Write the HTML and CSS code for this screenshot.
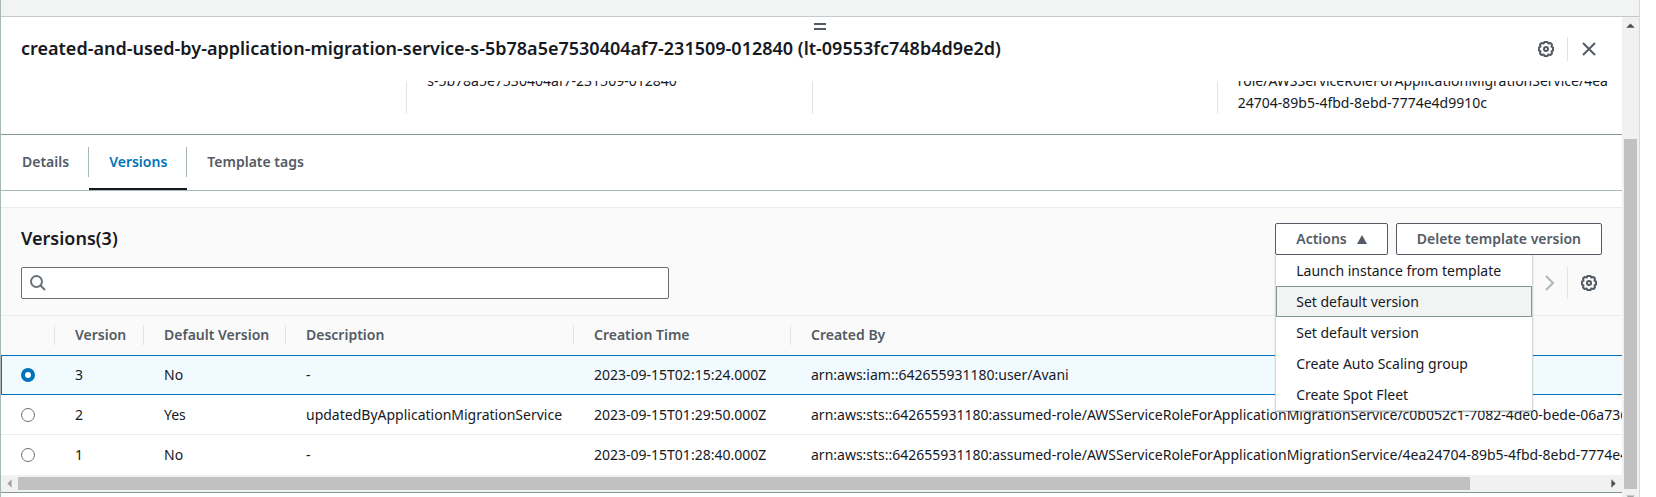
FILE: index.html
```html
<!DOCTYPE html>
<html lang="en">
<head>
<meta charset="utf-8">
<title>Launch template versions</title>
<link rel="stylesheet" href="styles.css">
</head>
<body>
<svg class="sprite" aria-hidden="true">
  <symbol id="gear" viewBox="0 0 16 16">
    <path d="M6.500 1H9.500L10.300 2.500 12.500 2 14 3.500 13.500 5.700 15 6.500V9.500L13.500 10.300 14 12.500 12.500 14 10.300 13.500 9.500 15H6.500L5.700 13.500 3.500 14 2 12.500 2.500 10.300 1 9.500V6.500L2.500 5.700 2 3.500 3.500 2 5.700 2.500Z" fill="none" stroke="currentColor" stroke-width="2" stroke-linejoin="round"/>
    <circle cx="8" cy="8" r="2" fill="none" stroke="currentColor" stroke-width="2"/>
  </symbol>
</svg>
<div class="frame">
  <div class="topbar"></div>
  <div class="panel">
    <main class="content">
      <header class="title-bar">
        <h1 class="title">created-and-used-by-application-migration-service-s-5b78a5e7530404af7-231509-012840 (lt-09553fc748b4d9e2d)</h1>
        <div class="tools">
          <button class="icon-button" aria-label="Preferences"><svg class="icon"><use href="#gear"/></svg></button>
          <span class="rule short"></span>
          <button class="icon-button" aria-label="Close"><svg class="icon" viewBox="0 0 16 16"><path d="M2 2 14 14M14 2 2 14" fill="none" stroke="currentColor" stroke-width="2"/></svg></button>
        </div>
      </header>
      <section class="summary">
        <div class="summary-cell"></div>
        <div class="summary-cell">s-5b78a5e7530404af7-231509-012840<br>&nbsp;</div>
        <div class="summary-cell"></div>
        <div class="summary-cell">role/AWSServiceRoleForApplicationMigrationService/4ea<br>24704-89b5-4fbd-8ebd-7774e4d9910c</div>
      </section>
      <nav class="tabs">
        <a class="tab" href="#details">Details</a>
        <a class="tab active" href="#versions">Versions</a>
        <a class="tab" href="#tags">Template tags</a>
      </nav>
      <section class="versions">
        <div class="versions-head">
          <div class="row">
            <h2 class="subtitle">Versions(3)</h2>
            <div class="actions">
              <div class="dropdown">
                <button class="button" aria-expanded="true">Actions <svg class="caret" viewBox="0 0 10 9"><path d="M5 0 10 9H0Z" fill="currentColor"/></svg></button>
                <div class="menu">
                  <button class="item">Launch instance from template</button>
                  <button class="item current">Set default version</button>
                  <button class="item">Set default version</button>
                  <button class="item">Create Auto Scaling group</button>
                  <button class="item">Create Spot Fleet</button>
                </div>
              </div>
              <button class="button">Delete template version</button>
            </div>
          </div>
          <div class="row">
            <label class="search">
              <svg class="icon" viewBox="0 0 16 16"><circle cx="6.500" cy="6.500" r="5.500" fill="none" stroke="currentColor" stroke-width="2"/><path d="M10.500 10.500 15 15" stroke="currentColor" stroke-width="2"/></svg>
              <input class="search-input" type="text" aria-label="Filter versions">
            </label>
            <div class="tools">
              <button class="icon-button next" aria-label="Next page"><svg class="icon" viewBox="0 0 16 16"><path d="M5 1 12 8 5 15" fill="none" stroke="currentColor" stroke-width="2"/></svg></button>
              <span class="rule"></span>
              <button class="icon-button" aria-label="Table settings"><svg class="icon"><use href="#gear"/></svg></button>
            </div>
          </div>
        </div>
        <div class="table-wrap">
          <table class="table">
            <colgroup><col class="c-radio"><col class="c-version"><col class="c-default"><col class="c-desc"><col class="c-time"><col></colgroup>
            <thead>
              <tr><th></th><th>Version</th><th>Default Version</th><th>Description</th><th>Creation Time</th><th>Created By</th></tr>
            </thead>
            <tbody>
              <tr class="selected"><td><input class="radio" type="radio" name="version" aria-label="Version 3" checked></td><td>3</td><td>No</td><td>-</td><td>2023-09-15T02:15:24.000Z</td><td>arn:aws:iam::642655931180:user/Avani</td></tr>
              <tr><td><input class="radio" type="radio" name="version" aria-label="Version 2"></td><td>2</td><td>Yes</td><td>updatedByApplicationMigrationService</td><td>2023-09-15T01:29:50.000Z</td><td>arn:aws:sts::642655931180:assumed-role/AWSServiceRoleForApplicationMigrationService/c0b052c1-7082-4de0-bede-06a736c</td></tr>
              <tr><td><input class="radio" type="radio" name="version" aria-label="Version 1"></td><td>1</td><td>No</td><td>-</td><td>2023-09-15T01:28:40.000Z</td><td>arn:aws:sts::642655931180:assumed-role/AWSServiceRoleForApplicationMigrationService/4ea24704-89b5-4fbd-8ebd-7774e4d9910c</td></tr>
            </tbody>
          </table>
        </div>
        <div class="hbar">
          <svg class="arrow dim" viewBox="0 0 16 16"><path d="M10 4V12L6 8Z" fill="currentColor"/></svg>
          <div class="htrack"><div class="hthumb"></div></div>
          <svg class="arrow" viewBox="0 0 16 16"><path d="M6 4V12L10 8Z" fill="currentColor"/></svg>
        </div>
      </section>
    </main>
    <div class="vbar">
      <svg class="arrow" viewBox="0 0 16 16"><path d="M4 10H12L8 6Z" fill="currentColor"/></svg>
      <div class="vthumb"></div>
      <svg class="arrow dim" viewBox="0 0 16 16"><path d="M4 6H12L8 10Z" fill="currentColor"/></svg>
    </div>
    <div class="grip"></div>
  </div>
</div>
</body>
</html>
```
FILE: styles.css
```css
* { box-sizing: border-box; }
body {
  margin: 0;
  height: 100vh;
  overflow: hidden;
  background: #fff;
  color: #16191f;
  font: 14px/22px "Noto Sans", "Open Sans", sans-serif;
}
button, input { font: inherit; }
.sprite { position: absolute; width: 0; height: 0; }
.frame {
  display: flex;
  flex-direction: column;
  height: 100vh;
  margin-right: 16px;
  border-left: 1px solid #aab7b8;
  border-right: 1px solid #d5dbdb;
}
.topbar { flex: none; height: 17px; background: #f2f3f3; border-bottom: 1px solid #c3cacd; }
.panel { position: relative; display: flex; flex: 1; min-height: 0; }
.content { flex: 1; min-width: 0; overflow: hidden; }
.grip {
  position: absolute;
  top: 6px;
  left: 50%;
  margin-left: -6px;
  width: 12px;
  height: 7px;
  border: solid #545b64;
  border-width: 2px 0;
}
.title-bar {
  display: flex;
  align-items: center;
  justify-content: space-between;
  height: 64px;
  padding: 0 20px;
}
.title, .subtitle { margin: 0 0 2px; font-size: 18px; line-height: 22px; font-weight: 600; white-space: nowrap; }
.tools { display: flex; align-items: center; }
.icon-button {
  display: flex;
  justify-content: center;
  width: 42px;
  padding: 0;
  border: 0;
  background: none;
  color: #545b64;
}
.tools .icon-button:last-child { margin-right: -8px; }
.icon { width: 16px; height: 16px; flex: none; }
.icon-button.next { width: 36px; color: #aab7b8; }
.rule { width: 1px; height: 32px; background: #e1e4e5; }
.rule.short { height: 24px; }
.summary {
  display: grid;
  grid-template-columns: repeat(4, 1fr);
  padding-bottom: 20px;
  border-bottom: 1px solid #879596;
}
.summary-cell {
  display: flex;
  flex-direction: column;
  justify-content: flex-end;
  height: 33px;
  padding-left: 20px;
  overflow: hidden;
  white-space: nowrap;
}
.summary-cell + .summary-cell { border-left: 1px solid #e1e4e5; }
.tabs { display: flex; height: 56px; padding-left: 1px; border-bottom: 1px solid #aab7b8; }
.tab {
  position: relative;
  padding: 16px 20px 0;
  border-bottom: 2px solid transparent;
  color: #545b64;
  font-weight: 600;
  text-decoration: none;
}
.tab.active { color: #0073bb; border-color: #16191f; }
.tab + .tab::before {
  content: "";
  position: absolute;
  left: -1px;
  top: 12px;
  width: 1px;
  height: 30px;
  background: #aab7b8;
}
.versions { margin-top: 16px; border-top: 1px solid #eaeded; border-bottom: 1px solid #879596; }
.versions-head {
  display: flex;
  flex-direction: column;
  gap: 12px;
  padding: 15px 20px 16px;
  background: #fafafa;
}
.row { display: flex; align-items: center; justify-content: space-between; }
.actions { display: flex; gap: 8px; }
.button {
  display: flex;
  align-items: center;
  gap: 10px;
  height: 32px;
  padding: 0 20px;
  border: 1px solid #545b64;
  border-radius: 2px;
  background: #fff;
  color: #545b64;
  font-weight: 600;
}
.caret { width: 10px; height: 9px; }
.dropdown { position: relative; }
.menu {
  position: absolute;
  z-index: 1;
  top: 100%;
  left: 0;
  width: 258px;
  background: #fff;
  border: 1px solid #d5dbdb;
  border-top: 0;
  box-shadow: 0 1px 1px rgba(0, 28, 36, 0.3);
}
.item {
  display: block;
  width: 100%;
  height: 31px;
  padding: 0 19px;
  border: 1px solid transparent;
  background: none;
  color: #16191f;
  text-align: left;
}
.item.current { background: #f2f3f3; border-color: #879596; }
.search {
  display: flex;
  align-items: center;
  width: 41%;
  height: 32px;
  padding-left: 8px;
  border: 1px solid #687078;
  border-radius: 2px;
  background: #fff;
  color: #687078;
}
.search-input { flex: 1; border: 0; outline: 0; background: none; }
.table-wrap { overflow: hidden; }
.table { width: 100%; table-layout: fixed; border-collapse: separate; border-spacing: 0; white-space: nowrap; }
.c-radio { width: 54px; }
.c-version { width: 89px; }
.c-default { width: 142px; }
.c-desc { width: 288px; }
.c-time { width: 217px; }
th {
  position: relative;
  height: 40px;
  padding: 0 20px 2px;
  border-top: 1px solid #eaeded;
  background: #fafafa;
  color: #545b64;
  font-weight: 600;
  text-align: left;
}
th + th::before {
  content: "";
  position: absolute;
  left: -1px;
  top: 9px;
  width: 1px;
  height: 20px;
  background: #e1e4e5;
}
td { height: 40px; padding: 0 20px; border-bottom: 1px solid #eaeded; }
tr:last-child td { border-bottom-color: transparent; }
.selected td { background: #f1faff; border-top: 1px solid #0073bb; border-bottom-color: #0073bb; }
.selected td:first-child { border-left: 1px solid #0073bb; padding-left: 19px; }
.radio {
  appearance: none;
  display: block;
  width: 14px;
  height: 14px;
  margin: 0;
  border: 1px solid #687078;
  border-radius: 50%;
  background: #fff;
}
.radio:checked { border: 4px solid #0073bb; }
.hbar { display: flex; align-items: center; height: 17px; background: #f1f1f1; }
.arrow { flex: none; width: 17px; height: 17px; color: #505050; }
.arrow.dim { color: #a3a3a3; }
.htrack { flex: 1; }
.hthumb { width: 91.5%; height: 13px; background: #c1c1c1; }
.vbar {
  display: flex;
  flex-direction: column;
  align-items: center;
  width: 17px;
  background: #f1f1f1;
}
.vthumb { flex: none; width: 13px; height: 350px; margin-top: 105px; background: #c1c1c1; }
```
